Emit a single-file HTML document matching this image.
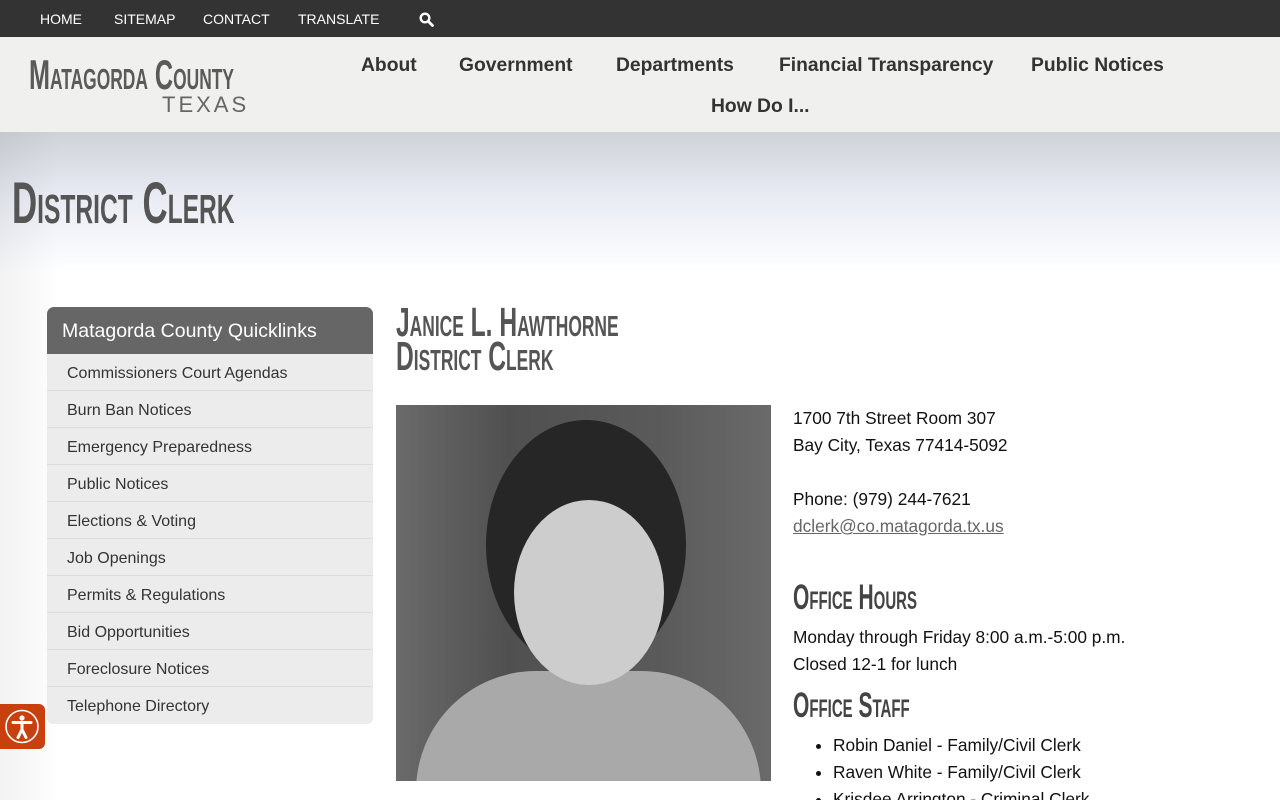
<!DOCTYPE html>
<html><head><meta charset="utf-8"><style>
*{margin:0;padding:0;box-sizing:border-box}
html,body{width:1280px;height:800px;overflow:hidden}
body{background:#fff;font-family:"Liberation Sans",sans-serif;color:#222;position:relative}
.top{height:37px;background:#333;position:relative}
.top span{position:absolute;top:11px;color:#fff;font-size:14px}
.hdr{height:95px;background:#f0f0ee;position:relative}
.cond{display:inline-block;transform-origin:left top;font-variant:small-caps;white-space:nowrap;font-weight:bold}
.nav{position:absolute;font-weight:bold;font-size:19.3px;color:#333}
.hero{position:absolute;top:132px;left:0;width:1280px;height:140px;background:linear-gradient(#cfd2d9,#e8ebf3 45%,#fff)}
.side{position:absolute;left:0;top:132px;width:60px;height:668px;background:linear-gradient(90deg,rgba(0,0,0,.05),rgba(0,0,0,0))}
.ql{position:absolute;left:47px;top:307px;width:326px}
.qh{height:47px;background:#666;color:#fff;font-size:19.5px;padding:13px 15px;border-radius:7px 7px 0 0}
.qi{height:37px;background:#ececec;border-bottom:1px solid #dcdcdc;font-size:16px;color:#333;padding:11px 20px 0}
.txt{position:absolute;left:793px;font-size:17.3px;color:#111}
</style></head><body>
<div class="top">
<span style="left:40px">HOME</span><span style="left:114px">SITEMAP</span><span style="left:203px">CONTACT</span><span style="left:298px">TRANSLATE</span>
<svg style="position:absolute;left:419px;top:12px" width="15" height="15" viewBox="0 0 15 15"><circle cx="6" cy="6" r="4.3" fill="none" stroke="#fff" stroke-width="2.4"/><line x1="9.2" y1="9.2" x2="13.5" y2="13.5" stroke="#fff" stroke-width="2.8" stroke-linecap="round"/></svg>
</div>
<div class="hdr">
<div class="cond" style="position:absolute;left:29px;top:14px;font-size:42px;color:#5a5a5a;transform:scaleX(.6)">Matagorda County</div>
<div style="position:absolute;left:162px;top:55px;font-size:22px;letter-spacing:3px;color:#666">TEXAS</div>
<div class="nav" style="left:361px;top:18px">About</div>
<div class="nav" style="left:459px;top:18px">Government</div>
<div class="nav" style="left:616px;top:18px">Departments</div>
<div class="nav" style="left:779px;top:18px">Financial Transparency</div>
<div class="nav" style="left:1031px;top:18px">Public Notices</div>
<div class="nav" style="left:711px;top:59px">How Do I...</div>
</div>
<div class="hero"></div>
<div class="side"></div>
<div class="cond" style="position:absolute;left:12px;top:170px;font-size:58px;color:#555;transform:scaleX(.6)">District Clerk</div>
<div class="ql">
<div class="qh">Matagorda County Quicklinks</div>
<div class="qi">Commissioners Court Agendas</div><div class="qi">Burn Ban Notices</div><div class="qi">Emergency Preparedness</div><div class="qi">Public Notices</div><div class="qi">Elections &amp; Voting</div><div class="qi">Job Openings</div><div class="qi">Permits &amp; Regulations</div><div class="qi">Bid Opportunities</div><div class="qi">Foreclosure Notices</div><div class="qi" style="border-radius:0 0 6px 6px;border:0">Telephone Directory</div>
</div>
<div style="position:absolute;left:0;top:704px;width:45px;height:45px;background:#c9400f;border-radius:0 6px 6px 0">
<svg width="45" height="45" viewBox="0 0 45 45"><circle cx="22" cy="22.5" r="16" fill="none" stroke="#fff" stroke-width="1.6"/><circle cx="22" cy="14" r="2.6" fill="#fff"/><path d="M13 18.5h18M22 18.5v7M22 25.5l-4 8M22 25.5l4 8" stroke="#fff" stroke-width="3" fill="none" stroke-linecap="round"/></svg></div>
<div class="cond" style="position:absolute;left:396px;top:305px;font-size:41px;line-height:34px;color:#555;transform:scaleX(.6)">Janice L. Hawthorne<br>District Clerk</div>
<div style="position:absolute;left:396px;top:405px;width:375px;height:376px;overflow:hidden;background:linear-gradient(90deg,#6a6a6a,#505050 30%,#5a5a5a 70%,#6a6a6a)">
<div style="position:absolute;left:90px;top:15px;width:200px;height:250px;background:#262626;border-radius:50%"></div>
<div style="position:absolute;left:20px;bottom:-20px;width:345px;height:130px;background:#a9a9a9;border-radius:120px 120px 0 0"></div>
<div style="position:absolute;left:118px;top:95px;width:150px;height:185px;background:#cdcdcd;border-radius:50%"></div>
</div>
<div class="txt" style="top:405px;line-height:27px">1700 7th Street Room 307<br>Bay City, Texas 77414-5092<br><br>Phone: (979) 244-7621<br><span style="color:#666;text-decoration:underline">dclerk@co.matagorda.tx.us</span></div>
<div class="cond" style="position:absolute;left:793px;top:578px;font-size:35px;color:#444;transform:scaleX(.6)">Office Hours</div>
<div class="txt" style="top:624px;line-height:27px">Monday through Friday 8:00 a.m.-5:00 p.m.<br>Closed 12-1 for lunch</div>
<div class="cond" style="position:absolute;left:793px;top:686px;font-size:35px;color:#444;transform:scaleX(.6)">Office Staff</div>
<ul class="txt" style="top:732px;left:833px;line-height:27px">
<li>Robin Daniel - Family/Civil Clerk</li><li>Raven White - Family/Civil Clerk</li><li>Krisdee Arrington - Criminal Clerk</li></ul>
</body></html>
